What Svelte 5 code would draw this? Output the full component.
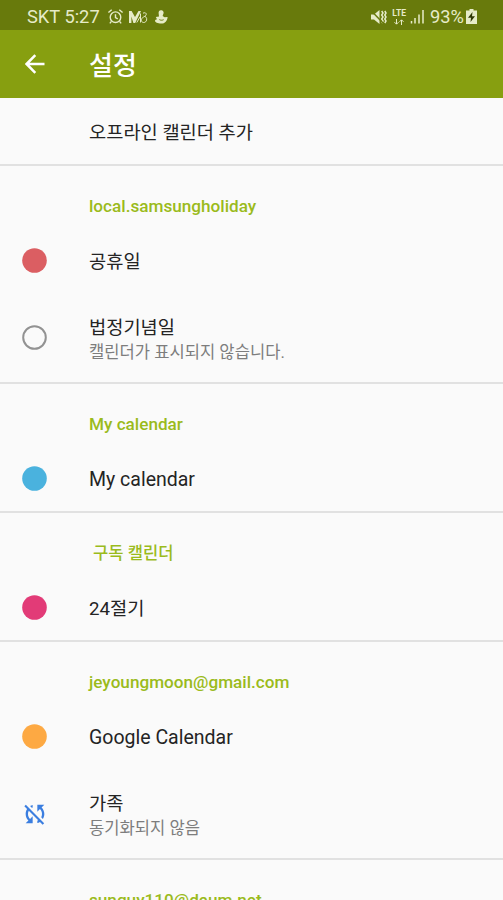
<script lang="ts">
  type Item = {
    title: string;
    note?: string;
    color?: string;
    icon?: 'dot' | 'ring' | 'sync-off';
  };

  type Section = {
    label: string;
    indent?: boolean;
    items: Item[];
  };

  const sections: Section[] = [
    {
      label: 'local.samsungholiday',
      items: [
        { title: '공휴일', icon: 'dot', color: '#db5e62' },
        { title: '법정기념일', note: '캘린더가 표시되지 않습니다.', icon: 'ring' }
      ]
    },
    {
      label: 'My calendar',
      items: [{ title: 'My calendar', icon: 'dot', color: '#4ab2de' }]
    },
    {
      label: '구독 캘린더',
      indent: true,
      items: [{ title: '24절기', icon: 'dot', color: '#e23b77' }]
    },
    {
      label: 'jeyoungmoon@gmail.com',
      items: [
        { title: 'Google Calendar', icon: 'dot', color: '#fda943' },
        { title: '가족', note: '동기화되지 않음', icon: 'sync-off' }
      ]
    },
    { label: 'sunguy110@daum.net', items: [] }
  ];

  // Hangul runs wider than Roboto at the same size
  const isKorean = (text: string) => /[가-힣]/.test(text);
</script>

<div class="screen">
  <div class="status">
    <span class="clock">SKT 5:27</span>
    <svg class="alarm" viewBox="0 0 18 18" width="17" height="17">
      <circle cx="9" cy="9.7" r="5.6" />
      <path d="M9 6.5v3.6l2.4 1.3M1.5 4.8 5 1.8M16.5 4.8 13 1.8M4.7 14.2 3 16.3M13.3 14.2 15 16.3" />
    </svg>
    <svg class="app" viewBox="0 0 20 16" width="20" height="16">
      <path class="fill" d="M1 2h2.6l3.4 6L10.5 2H13L7.2 14H5.4L3.4 7.5V14H1z" />
      <path class="thin" d="M12.5 4.5v9M15 4.2c3-1.5 4.5 1.2 2 3M15.5 7.3c4.5-.5 4 6.5 0 6.2-3-.3-3-4.6 0-5M8.8 13.5l3.4-6" />
    </svg>
    <svg class="duck" viewBox="0 0 14 16" width="14" height="16">
      <path class="fill" d="M6.8 1.2c2.4 0 3.6 2.2 2.4 4L8.6 7l2 1.3 3-.3c-.3 4-2.6 6.6-6.4 6.6-3.5 0-6.3-1.2-6.2-2.8.1-1 .9-1.4 2-1.6L1.8 8l3.2-.6L4.6 4c-.1-1.7.8-2.8 2.2-2.8z" />
      <path class="cut" d="M5.4 10.6c1.3.8 2.8.8 4.2.1" />
    </svg>
    <span class="spacer"></span>
    <svg class="mute" viewBox="0 0 17 16" width="17" height="16">
      <path class="fill" d="M1 5.5h3L9.5 1v14L4 10.5H1z" />
      <path d="M11.7 2l1.3 2-1.3 2 1.3 2-1.3 2 1.3 2-1.3 2M14.8 2l1.2 2-1.2 2 1.2 2-1.2 2 1.2 2-1.2 2" />
      <path class="slash" d="M1 1.5 13 14" />
    </svg>
    <div class="network">
      <span>LTE</span>
      <svg viewBox="0 0 12 6" width="12" height="6">
        <path class="thin" d="M3.5 0v5M1.5 3.2l2 2 2-2M8.5 6V1M6.5 2.8l2-2 2 2" />
      </svg>
    </div>
    <svg class="signal" viewBox="0 0 15 15" width="15" height="15">
      <path d="M1.5 12v2.5M5 9v5.5M9 5.5v9M13 1v13.5" />
    </svg>
    <span class="percent">93%</span>
    <svg class="battery" viewBox="0 0 11 15" width="11" height="15">
      <path class="fill" d="M3.5 0h4v1.5H11V15H0V1.5h3.5z" />
      <path class="bolt" d="M6.5 3 2 8.8h3L4.5 13 9 7.2H6z" />
    </svg>
  </div>

  <header>
    <svg class="back" viewBox="0 0 20 20" width="20" height="20">
      <path d="M19.5 10H2M10.3 1.2 1.6 10l8.7 8.8" />
    </svg>
    <h1>설정</h1>
  </header>

  <div class="row add">
    <span class="title korean">오프라인 캘린더 추가</span>
  </div>

  {#each sections as section}
    <section>
      <h2 class:indent={section.indent}>{section.label}</h2>
      {#each section.items as item}
        <div class="row" class:tall={item.note}>
          <div class="lead">
            {#if item.icon === 'sync-off'}
              <svg class="sync" viewBox="0 0 24 24" width="28" height="28">
                <path d="M10 6.35V4.26c-.8.21-1.55.54-2.23.96l1.46 1.46c.25-.12.5-.24.77-.33zm-7.14-.94 2.36 2.36C4.45 8.99 4 10.44 4 12c0 2.21.91 4.2 2.36 5.64L4 20h6v-6l-2.24 2.24C6.68 15.15 6 13.66 6 12c0-1 .25-1.94.68-2.77l8.08 8.08c-.25.13-.5.25-.77.34v2.09c.8-.21 1.55-.54 2.23-.96l2.36 2.36 1.27-1.27L4.14 4.14 2.86 5.41zM20 4h-6v6l2.24-2.24C17.32 8.85 18 10.34 18 12c0 1-.25 1.94-.68 2.77l1.46 1.46C19.55 15.01 20 13.56 20 12c0-2.21-.91-4.2-2.36-5.64L20 4z" />
              </svg>
            {:else}
              <svg viewBox="0 0 25 25" width="25" height="25">
                {#if item.icon === 'ring'}
                  <circle class="ring" cx="12.5" cy="12.5" r="11.3" />
                {:else}
                  <circle cx="12.5" cy="12.5" r="12.3" fill={item.color} />
                {/if}
              </svg>
            {/if}
          </div>
          <div class="text">
            <span class="title" class:korean={isKorean(item.title)}>{item.title}</span>
            {#if item.note}
              <span class="note">{item.note}</span>
            {/if}
          </div>
        </div>
      {/each}
    </section>
  {/each}
</div>

<style>
:global(body) {
  margin: 0;
}

.screen {
  height: 900px;
  overflow: hidden;
  background: #fafafa;
  color: #242424;
  font-family: Roboto, "Noto Sans CJK KR", sans-serif;
}

.status {
  display: flex;
  align-items: center;
  box-sizing: border-box;
  height: 30px;
  padding: 3px 26px 0 27px;
  background: #687a0c;
  color: #e6ebc8;
}

.status svg {
  flex-shrink: 0;
  fill: none;
  stroke: #e6ebc8;
  stroke-width: 1.5;
}

.status .fill {
  fill: #e6ebc8;
  stroke: none;
}

.status .thin {
  stroke-width: 1;
}

.status .cut,
.status .slash {
  stroke: #687a0c;
}

.status .cut {
  stroke-width: 1;
}

.clock,
.percent {
  font-size: 18.3px;
  line-height: 24px;
  white-space: nowrap;
}

.alarm {
  margin-left: 7px;
}

.app {
  margin-left: 4px;
}

.duck {
  margin-left: 6px;
}

.spacer {
  flex: 1;
}

.network {
  display: flex;
  flex-direction: column;
  align-items: center;
  gap: 1px;
  margin-left: 5px;
  font-size: 8.5px;
  font-weight: 700;
  line-height: 9px;
}

.signal {
  margin-left: 4px;
}

.percent {
  margin-left: 5px;
}

.battery {
  margin-left: 2px;
}

.status .bolt {
  fill: #2f3806;
  stroke: none;
}

header {
  display: flex;
  align-items: center;
  height: 68px;
  padding-left: 25px;
  background: #879f10;
  color: #fff;
}

.back {
  fill: none;
  stroke: #fff;
  stroke-width: 2.5;
}

h1 {
  margin: 0 0 0 44px;
  padding-top: 3px;
  font-size: 26px;
  font-weight: 500;
  line-height: 36px;
}

.row {
  display: flex;
  align-items: center;
  height: 66px;
}

.add {
  padding-left: 89px;
}

.lead {
  display: flex;
  align-items: center;
  width: 67px;
  padding-left: 22px;
}

.tall {
  height: 89px;
}

.ring {
  fill: none;
  stroke: #929292;
  stroke-width: 2;
}

.sync {
  margin-left: -1px;
  fill: #3b7ee0;
}

.text {
  display: flex;
  flex-direction: column;
}

.title {
  padding-top: 3px;
  font-size: 19.5px;
  line-height: 26px;
}

.korean {
  padding-top: 4px;
  font-size: 18.7px;
  line-height: 24px;
}

.tall .title {
  padding-top: 6px;
}

.note {
  padding-top: 1px;
  color: #7d7d7d;
  font-size: 16.6px;
  line-height: 24px;
}

section {
  border-top: 2px solid #e1e1e1;
}

h2 {
  margin: 0;
  padding: 28px 0 8px 89px;
  color: #9abb1c;
  font-size: 17.15px;
  font-weight: 500;
  line-height: 25px;
}

.indent {
  padding-left: 93px;
  font-size: 16.6px;
}
</style>
